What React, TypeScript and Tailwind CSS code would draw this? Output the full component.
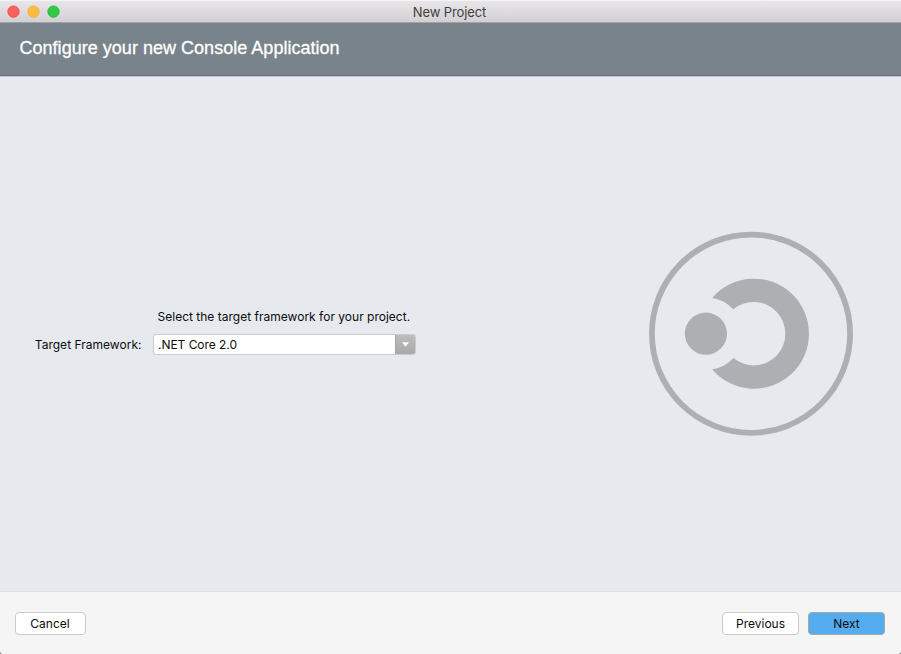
import React from "react";

function TrafficLights() {
  return (
    <svg className="ml-[7px] h-[13px] w-[53px]" viewBox="0 0 53 13">
      <circle cx="6.5" cy="6.6" r="5.7" fill="#fc605c" stroke="#f04b48" strokeWidth="0.8" />
      <circle cx="26.5" cy="6.6" r="5.7" fill="#fdbc40" stroke="#f0ae2c" strokeWidth="0.8" />
      <circle cx="46.5" cy="6.6" r="5.7" fill="#34c84a" stroke="#1fbd31" strokeWidth="0.8" />
    </svg>
  );
}

function TitleBar() {
  return (
    <header className="grid h-[23px] shrink-0 grid-cols-[1fr_auto_1fr] items-center border-b border-[#a3a2a4] border-t border-t-[#f4f3f4] bg-linear-to-b from-[#e8e6e8] to-[#d2d0d2]">
      <TrafficLights />
      <h1 className="pr-[2px] text-[13px] leading-4 tracking-[-0.12px] text-[#3e3e3e]">New Project</h1>
      <span />
    </header>
  );
}

function ProjectLogo() {
  return (
    <svg className="size-[204px] shrink-0" viewBox="0 0.3 204 204" fill="#adafb3" overflow="visible">
      <circle cx="102" cy="102" r="99.1" fill="none" stroke="#adafb3" strokeWidth="5.8" />
      <circle cx="56.9" cy="102" r="21.1" />
      <path d="M63.2 66.2A55 55 0 1 1 63.2 137.8A36.4 36.4 0 0 0 84.4 126.4A31.7 31.7 0 1 0 84.4 77.6A36.4 36.4 0 0 0 63.2 66.2Z" />
    </svg>
  );
}

function FrameworkSelect() {
  return (
    <button className="flex h-[21px] w-[263px] items-stretch overflow-hidden rounded-[3px] border border-[#c9cbce] bg-white text-left">
      <span className="flex-1 pl-1 leading-[19px] tracking-[-0.04px]">.NET Core 2.0</span>
      <span className="-my-px -mr-px flex w-[21px] items-center justify-center rounded-r-[3px] border border-[#a3a3a4] bg-linear-to-b from-[#bdbdbd] to-[#a9a9a9]">
        <svg className="h-[5px] w-[7px]" viewBox="0 0 8 5" fill="white">
          <path d="M0 0H8L4 5Z" />
        </svg>
      </span>
    </button>
  );
}

export default function App() {
  return (
    <div className="h-[654px] w-[901px] bg-[#8f8f8f] font-['Inter','Liberation_Sans',sans-serif] text-[12px] text-[#0c0c0c]">
      <div className="flex h-full flex-col overflow-hidden rounded-b-[4px] bg-[#e6eaef]">
        <TitleBar />
        <div className="flex h-[53px] shrink-0 items-center border-b border-[#68727b] bg-[#79838c] pb-[2px] pl-[19.5px]">
          <h2 className="font-['Liberation_Sans',sans-serif] text-[18px] leading-6 tracking-[0.025px] text-white [-webkit-text-stroke:0.3px_white]">
            Configure your new Console Application
          </h2>
        </div>
        <main className="flex min-h-0 flex-1 items-center justify-between border-t border-[#c4c9ce] pr-12">
          <div className="grid grid-cols-[142px_263px] gap-x-[11px] gap-y-[9px] pb-[4px]">
            <p className="col-start-2 pl-[4.5px] leading-4 tracking-[0.01px] whitespace-nowrap">
              Select the target framework for your project.
            </p>
            <label className="pr-[0.5px] text-right leading-[21px] tracking-[0.02px] whitespace-nowrap">Target Framework:</label>
            <FrameworkSelect />
          </div>
          <ProjectLogo />
        </main>
        <footer className="flex h-[63px] shrink-0 items-start border-t border-[#dfe1e4] bg-[#f5f5f5] px-4 pt-5">
          <button className="-ml-px h-[23px] w-[71px] rounded-[4px] border border-[#cbcbcb] bg-white pr-px leading-[21px]">Cancel</button>
          <button className="ml-auto h-[23px] w-[77px] rounded-[4px] border border-[#cbcbcb] bg-white leading-[21px]">Previous</button>
          <button className="ml-[9px] h-[23px] w-[77px] rounded-[4px] border border-[#a6a9ac] bg-[#55acef] leading-[21px]">Next</button>
        </footer>
      </div>
    </div>
  );
}
